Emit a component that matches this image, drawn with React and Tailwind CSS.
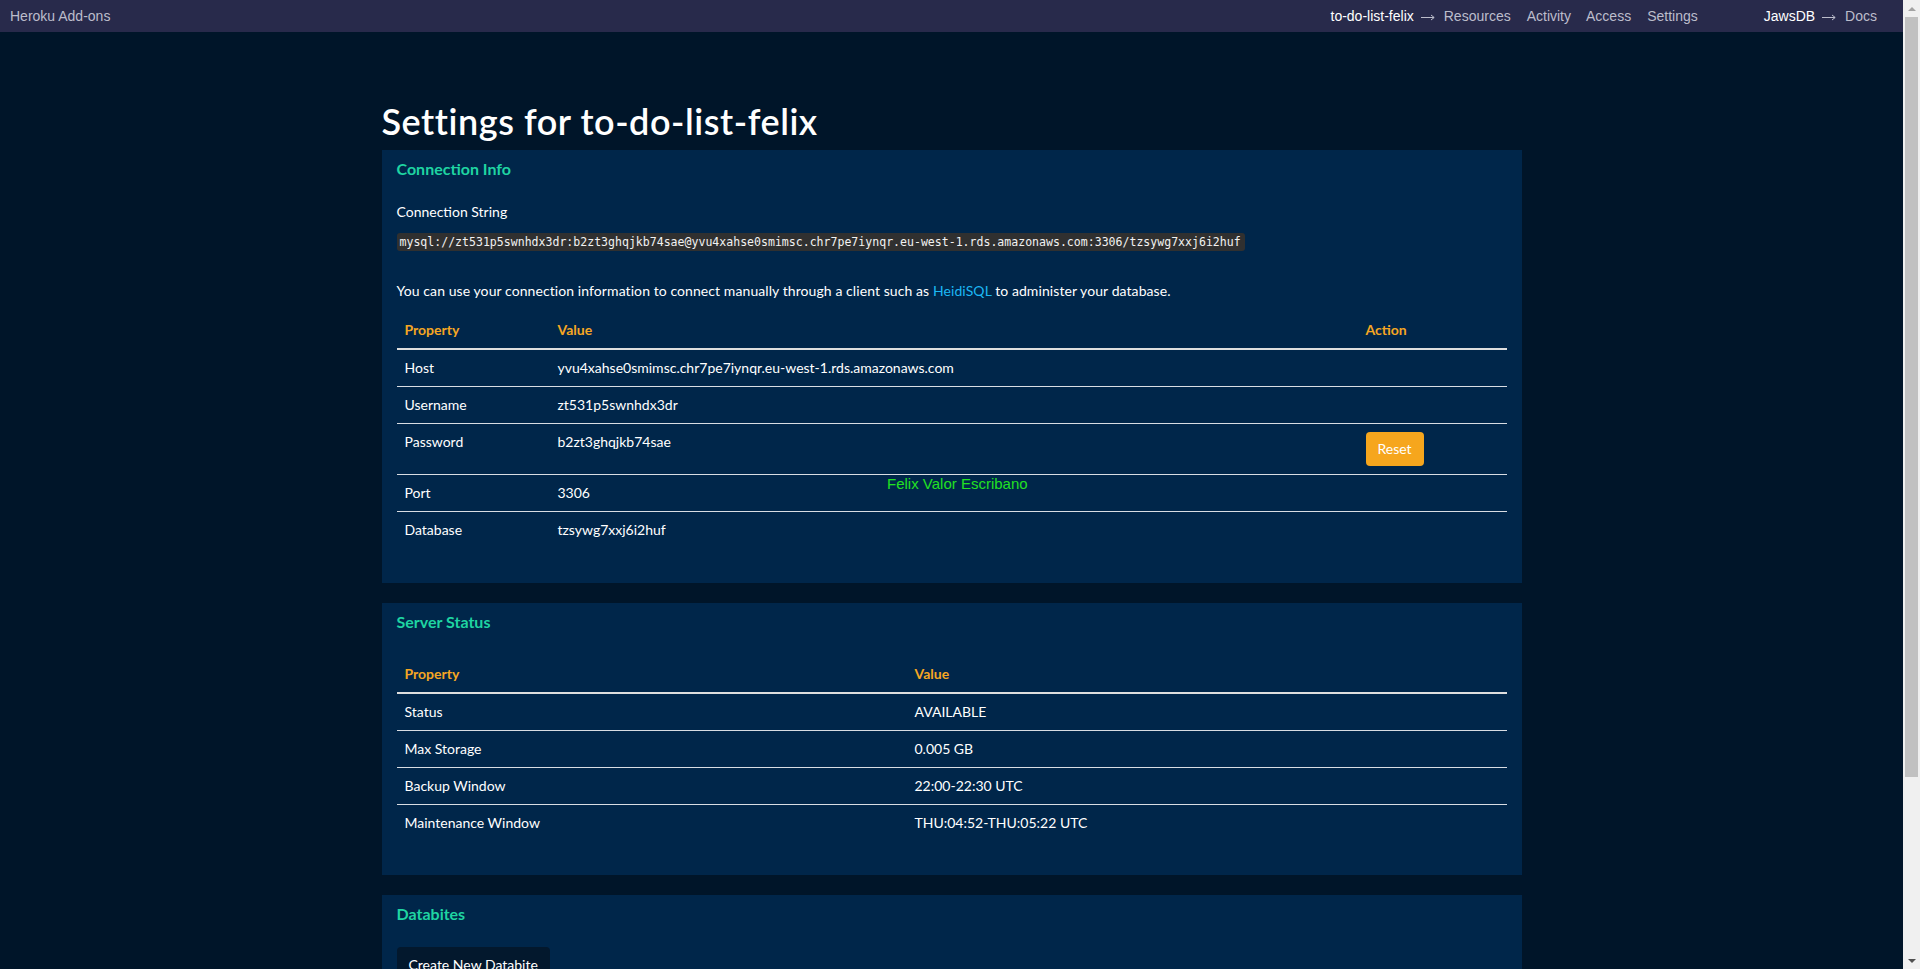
import React from "react";

const CONN =
  "mysql://zt531p5swnhdx3dr:b2zt3ghqjkb74sae@yvu4xahse0smimsc.chr7pe7iynqr.eu-west-1.rds.amazonaws.com:3306/tzsywg7xxj6i2huf";

const CONN_ROWS = [
  { prop: "Host", value: "yvu4xahse0smimsc.chr7pe7iynqr.eu-west-1.rds.amazonaws.com" },
  { prop: "Username", value: "zt531p5swnhdx3dr" },
  { prop: "Password", value: "b2zt3ghqjkb74sae", reset: true },
  { prop: "Port", value: "3306" },
  { prop: "Database", value: "tzsywg7xxj6i2huf" },
];

const STATUS_ROWS = [
  { prop: "Status", value: "AVAILABLE" },
  { prop: "Max Storage", value: "0.005 GB" },
  { prop: "Backup Window", value: "22:00-22:30 UTC" },
  { prop: "Maintenance Window", value: "THU:04:52-THU:05:22 UTC" },
];

// thin long arrow like the breadcrumb separator
function Arrow() {
  return (
    <svg className="ml-[7px] mr-[9px] mt-[2px]" width="14" height="8" viewBox="0 0 14 8" fill="none" stroke="currentColor" strokeWidth="1">
      <path d="M0 4.5H13" />
      <path d="M10 2L13.2 4.5L10 7" />
    </svg>
  );
}

function NavBar() {
  return (
    <div className="h-8 bg-[#282a4b] flex items-center pl-[10px] pr-[26px] text-[14px] font-['Liberation_Sans',Arial,sans-serif] text-[#bcbdcb]">
      <span>Heroku Add-ons</span>
      <div className="ml-auto flex items-center">
        <span className="text-white">to-do-list-felix</span>
        <Arrow />
        <span>Resources</span>
        <span className="ml-4">Activity</span>
        <span className="ml-[15px]">Access</span>
        <span className="ml-4">Settings</span>
        <span className="ml-[66px] text-white">JawsDB</span>
        <Arrow />
        <span>Docs</span>
      </div>
    </div>
  );
}

function Panel({ title, children, className = "" }) {
  return (
    <div className={`bg-[#00264a] px-[15px] pt-[9px] ${className}`}>
      <h3 className="text-[16px] leading-5 font-bold text-[#1fd4a2]">{title}</h3>
      {children}
    </div>
  );
}

function ConnectionInfo() {
  return (
    <Panel title="Connection Info" className="pb-[35px]">
      <p className="mt-[22px] leading-[21px]">Connection String</p>
      <div className="mt-[11px] inline-block bg-[#303030] rounded-[3px] px-[3px] pr-[4px] h-[18px] leading-[18px] text-[11.55px] text-[#f2f2f2] font-['DejaVu_Sans_Mono','Liberation_Mono',monospace]">
        {CONN}
      </div>
      <p className="mt-[29px] leading-[21px] tracking-[0.08px]">
        You can use your connection information to connect manually through a client such as{" "}
        <span className="text-[#1cb8f5]">HeidiSQL</span> to administer your database.
      </p>
      <div className="mt-[13px]">
        <div className="flex h-9 items-center pb-1 border-b-2 border-[#dedede] font-bold text-[#f5a623]">
          <div className="w-[153px] px-2">Property</div>
          <div className="flex-1 px-2">Value</div>
          <div className="w-[149px] px-2">Action</div>
        </div>
        {CONN_ROWS.map((r, i) => (
          <div
            key={r.prop}
            className={`flex items-start py-2 leading-5 ${i < CONN_ROWS.length - 1 ? "border-b border-[#d8dde3]" : ""}`}
          >
            <div className="w-[153px] px-2">{r.prop}</div>
            <div className="flex-1 px-2">{r.value}</div>
            <div className="w-[149px] px-2">
              {r.reset && (
                <button className="h-[34px] px-3 rounded-[4px] bg-[#f6a61d] text-white">Reset</button>
              )}
            </div>
          </div>
        ))}
      </div>
    </Panel>
  );
}

function ServerStatus() {
  return (
    <Panel title="Server Status" className="pb-[34px] mt-5">
      <div className="mt-[26px]">
        <div className="flex h-9 items-center pb-1 border-b-2 border-[#dedede] font-bold text-[#f5a623]">
          <div className="w-[510px] px-2">Property</div>
          <div className="flex-1 px-2">Value</div>
        </div>
        {STATUS_ROWS.map((r, i) => (
          <div
            key={r.prop}
            className={`flex py-2 leading-5 ${i < STATUS_ROWS.length - 1 ? "border-b border-[#d8dde3]" : ""}`}
          >
            <div className="w-[510px] px-2">{r.prop}</div>
            <div className="flex-1 px-2">{r.value}</div>
          </div>
        ))}
      </div>
    </Panel>
  );
}

function Databites() {
  return (
    <Panel title="Databites" className="pb-[34px] mt-5">
      <button className="mt-[23px] h-[34px] px-3 rounded-[4px] bg-[#03182d] text-white">
        Create New Databite
      </button>
    </Panel>
  );
}

function ScrollBar() {
  return (
    <div className="w-[17px] h-full bg-[#f0f0f0] relative shrink-0">
      <div className="h-[17px] flex items-center justify-center">
        <div className="w-0 h-0 border-l-[4px] border-r-[4px] border-b-[4px] border-l-transparent border-r-transparent border-b-[#a3a3a3]" />
      </div>
      <div className="ml-[2px] w-[13px] h-[760px] bg-[#c1c1c1]" />
      <div className="absolute bottom-0 left-0 w-[17px] h-[17px] flex items-center justify-center">
        <div className="w-0 h-0 border-l-[4px] border-r-[4px] border-t-[4px] border-l-transparent border-r-transparent border-t-[#505050]" />
      </div>
    </div>
  );
}

export default function App() {
  return (
    <div className="h-[969px] w-[1920px] overflow-hidden flex bg-[#001529]">
      <div className="flex-1 min-w-0 relative h-full overflow-hidden">
        <NavBar />
        <div className="w-[1140px] mx-auto pt-[68px] font-['Lato','Noto_Sans',sans-serif] text-[14px] text-white">
          <h1 className="text-[36px] leading-[43px] font-semibold tracking-[0.55px] text-white mb-[7px]">
            Settings for to-do-list-felix
          </h1>
          <ConnectionInfo />
          <ServerStatus />
          <Databites />
        </div>
        <div className="absolute left-[887px] top-[475px] text-[15px] leading-[17px] text-[#22e022] font-['Liberation_Sans',Arial,sans-serif]">
          Felix Valor Escribano
        </div>
      </div>
      <ScrollBar />
    </div>
  );
}
